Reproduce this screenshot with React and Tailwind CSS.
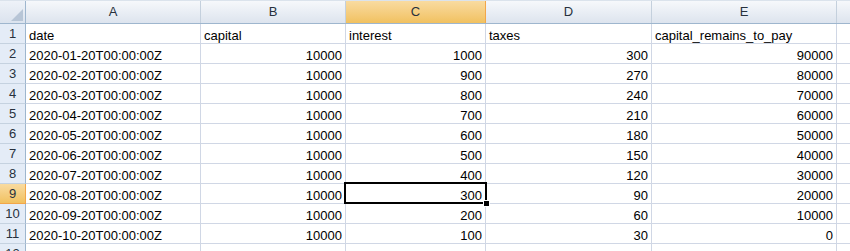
const COLUMNS = [
  { key: "A", label: "A", width: "w-[175px]" },
  { key: "B", label: "B", width: "w-[145px]" },
  { key: "C", label: "C", width: "w-[140px]" },
  { key: "D", label: "D", width: "w-[166px]" },
  { key: "E", label: "E", width: "w-[185px]" },
  // columna F apenas visible en el borde, sin letra
  { key: "F", label: "", width: "w-[40px]" },
];

const ROWS = [
  ["date", "capital", "interest", "taxes", "capital_remains_to_pay"],
  ["2020-01-20T00:00:00Z", 10000, 1000, 300, 90000],
  ["2020-02-20T00:00:00Z", 10000, 900, 270, 80000],
  ["2020-03-20T00:00:00Z", 10000, 800, 240, 70000],
  ["2020-04-20T00:00:00Z", 10000, 700, 210, 60000],
  ["2020-05-20T00:00:00Z", 10000, 600, 180, 50000],
  ["2020-06-20T00:00:00Z", 10000, 500, 150, 40000],
  ["2020-07-20T00:00:00Z", 10000, 400, 120, 30000],
  ["2020-08-20T00:00:00Z", 10000, 300, 90, 20000],
  ["2020-09-20T00:00:00Z", 10000, 200, 60, 10000],
  ["2020-10-20T00:00:00Z", 10000, 100, 30, 0],
  ["", "", "", "", ""],
];

// celda activa: C9
const ACTIVE_ROW = 9;
const ACTIVE_COL = "C";

function Cell({ value, width, active }) {
  const isNumber = typeof value === "number";
  return (
    <div
      className={`relative ${width} shrink-0 h-full border-r border-b border-[#d0d7e5] flex items-end pb-[1px] ${isNumber ? "justify-end pr-[3px]" : "justify-start pl-[3px]"}`}
    >
      <span className="leading-none whitespace-nowrap">{value}</span>
      {active && (
        <>
          <div className="absolute z-10 left-[-2px] top-[-2px] right-[-2px] bottom-[-1px] border-2 border-black pointer-events-none" />
          <div className="absolute z-20 right-[-5px] bottom-[-4px] w-[7px] h-[7px] bg-black border border-white" />
        </>
      )}
    </div>
  );
}

export default function App() {
  return (
    <div
      className="w-[850px] h-[251px] overflow-hidden bg-white text-black text-[13px]"
      style={{ fontFamily: '"Liberation Sans", Arial, sans-serif' }}
    >
      {/* Encabezado de columnas */}
      <div className="flex h-[24px] border-t border-[#dbe3ec] border-b border-b-[#9eb6ce]">
        <div className="w-[26px] shrink-0 h-full border-r border-[#9eb6ce] bg-gradient-to-b from-[#eef2f8] to-[#dbe3ee] flex items-end justify-end p-[2px]">
          <svg width="12" height="12" viewBox="0 0 12 12">
            <polygon points="12,0 12,12 0,12" fill="#b7c5d6" />
          </svg>
        </div>
        {COLUMNS.map((col) => (
          <div
            key={col.key}
            className={`${col.width} shrink-0 h-full border-r flex items-center justify-center text-[#27313d] ${
              col.key === ACTIVE_COL
                ? "bg-gradient-to-b from-[#f9dba0] to-[#f1c15f] border-[#f2a64a]"
                : "bg-gradient-to-b from-[#f6f8fb] to-[#dde4ee] border-[#c4d0dd]"
            }`}
          >
            {col.label}
          </div>
        ))}
      </div>

      {/* Filas */}
      {ROWS.map((row, i) => {
        const rowNum = i + 1;
        const isActiveRow = rowNum === ACTIVE_ROW;
        return (
          <div key={rowNum} className="flex h-[20px]">
            <div
              className={`w-[26px] shrink-0 h-full border-r border-b flex items-center justify-center text-[#27313d] ${
                isActiveRow
                  ? "bg-gradient-to-b from-[#f9dba0] to-[#f1c15f] border-r-[#f2a64a] border-b-[#f2a64a]"
                  : "bg-[#e4ecf7] border-r-[#9eb6ce] border-b-[#c5d2e0]"
              }`}
            >
              {rowNum}
            </div>
            {COLUMNS.map((col, j) => (
              <Cell
                key={col.key}
                width={col.width}
                value={row[j] ?? ""}
                active={isActiveRow && col.key === ACTIVE_COL}
              />
            ))}
          </div>
        );
      })}
    </div>
  );
}
